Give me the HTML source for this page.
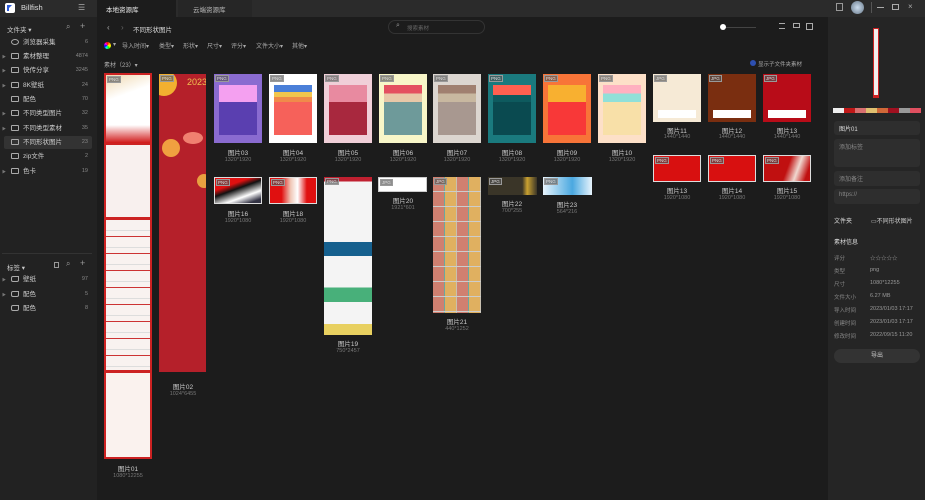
<!DOCTYPE html>
<html><head><meta charset="utf-8"><style>
*{margin:0;padding:0;box-sizing:border-box}
body{width:925px;height:500px;background:#1c1c1c;font-family:"Liberation Sans","Noto Sans CJK SC",sans-serif;color:#ccc;position:relative;overflow:hidden;font-size:7px}
.a{position:absolute}
.top{left:0;top:0;width:925px;height:17px;background:#2b2b2b}
.side{left:0;top:17px;width:97px;height:483px;background:#222}
.rp{left:828px;top:17px;width:97px;height:483px;background:#252525}
.it{position:absolute;left:4px;width:88px;height:13px;font-size:6.5px;color:#ccc;line-height:13px}
.it .n{position:absolute;right:4px;color:#888;font-size:5.5px}
.it .f{position:absolute;left:7px;top:3px;width:8px;height:6px;border:1px solid #aaa;border-radius:1px}
.it .t{position:absolute;left:19px}
.it .ar{position:absolute;left:-2px;color:#777;font-size:4px}
.th{position:absolute;overflow:hidden}
.lb{position:absolute;text-align:center;font-size:6.5px;color:#ccc;width:60px}
.dm{position:absolute;text-align:center;font-size:5.5px;color:#777;width:60px}
.tag{position:absolute;left:1px;top:1px;background:#555a;color:#ddd;font-size:4.5px;padding:0 1px;border:1px solid #999}
.fld{position:absolute;left:834px;width:86px;background:#2e2e2e;border-radius:3px;font-size:6px;color:#888;padding:3px 5px}
.kv{position:absolute;left:834px;font-size:5.5px;color:#888}
.kv b{position:absolute;left:36px;font-weight:normal;color:#999;white-space:nowrap}
.fl{position:absolute;top:41px;font-size:6px;color:#aaa}
</style></head><body>
<div class="a top"></div>
<div class="a" style="left:5px;top:3px;width:10px;height:10px;background:#fff;border-radius:2px"><div style="position:absolute;left:2px;top:2px;width:5px;height:6px;background:#2d5bd8;clip-path:polygon(0 0,100% 0,40% 50%,40% 100%,0 100%)"></div></div>
<div class="a" style="left:21px;top:3px;font-size:7.5px;color:#ddd">Billfish</div>
<div class="a" style="left:78px;top:3px;font-size:8px;color:#aaa">☰</div>
<div class="a" style="left:97px;top:0;width:79px;height:17px;background:#1c1c1c"></div>
<div class="a" style="left:106px;top:4px;font-size:6.5px;color:#eee">本地资源库</div>
<div class="a" style="left:178px;top:0;width:74px;height:17px;background:#262626"></div>
<div class="a" style="left:193px;top:4px;font-size:6.5px;color:#bbb">云端资源库</div>
<div class="a" style="left:836px;top:3px;width:7px;height:8px;border:1px solid #999"></div>
<div class="a" style="left:851px;top:1px;width:13px;height:13px;border-radius:50%;background:radial-gradient(#cde,#678)"></div>
<div class="a" style="left:871px;top:2px;width:1px;height:11px;background:#555"></div>
<div class="a" style="left:877px;top:7px;width:7px;height:1px;background:#aaa"></div>
<div class="a" style="left:892px;top:4px;width:7px;height:6px;border:1px solid #aaa"></div>
<div class="a" style="left:908px;top:2px;font-size:8px;color:#aaa">×</div>

<div class="a side"></div>
<div class="a" style="left:7px;top:24px;font-size:6.5px;color:#ccc">文件夹 ▾</div>
<div class="a" style="left:66px;top:22px;font-size:8px;color:#999">⌕</div>
<div class="a" style="left:80px;top:21px;font-size:9px;color:#999">+</div>
<div class="it" style="top:36px"><span class="f" style="border-radius:50%"></span><span class="t">浏览器采集</span><span class="n">6</span></div>
<div class="it" style="top:50px"><span class="ar">▶</span><span class="f"></span><span class="t">素材整理</span><span class="n">4874</span></div>
<div class="it" style="top:64px"><span class="ar">▶</span><span class="f"></span><span class="t">快传分享</span><span class="n">3245</span></div>
<div class="it" style="top:79px"><span class="ar">▶</span><span class="f"></span><span class="t">8K壁纸</span><span class="n">24</span></div>
<div class="it" style="top:93px"><span class="f"></span><span class="t">配色</span><span class="n">70</span></div>
<div class="it" style="top:107px"><span class="ar">▶</span><span class="f"></span><span class="t">不同类型图片</span><span class="n">32</span></div>
<div class="it" style="top:122px"><span class="ar">▶</span><span class="f"></span><span class="t">不同类型素材</span><span class="n">35</span></div>
<div class="it" style="top:136px;background:#333;border-radius:2px"><span class="f"></span><span class="t">不同形状图片</span><span class="n">23</span></div>
<div class="it" style="top:150px"><span class="f"></span><span class="t">zip文件</span><span class="n">2</span></div>
<div class="it" style="top:165px"><span class="ar">▶</span><span class="f"></span><span class="t">色卡</span><span class="n">19</span></div>
<div class="a" style="left:2px;top:253px;width:90px;height:1px;background:#333"></div>
<div class="a" style="left:7px;top:262px;font-size:6.5px;color:#ccc">标签 ▾</div>
<div class="a" style="left:54px;top:262px;width:5px;height:6px;border:1px solid #999"></div>
<div class="a" style="left:66px;top:259px;font-size:8px;color:#999">⌕</div>
<div class="a" style="left:80px;top:258px;font-size:9px;color:#999">+</div>
<div class="it" style="top:273px"><span class="ar">▶</span><span class="f" style="border-radius:2px 0 2px 2px"></span><span class="t">壁纸</span><span class="n">97</span></div>
<div class="it" style="top:288px"><span class="ar">▶</span><span class="f" style="border-radius:2px 0 2px 2px"></span><span class="t">配色</span><span class="n">5</span></div>
<div class="it" style="top:302px"><span class="f" style="border-radius:2px 0 2px 2px"></span><span class="t">配色</span><span class="n">8</span></div>

<div class="a" style="left:107px;top:23px;font-size:8px;color:#aaa">‹</div>
<div class="a" style="left:121px;top:23px;font-size:8px;color:#666">›</div>
<div class="a" style="left:133px;top:24px;font-size:6.5px;color:#ddd">不同形状图片</div>
<div class="a" style="left:388px;top:20px;width:97px;height:14px;border:1px solid #333;border-radius:7px"></div>
<div class="a" style="left:396px;top:22px;font-size:7px;color:#999">⌕</div>
<div class="a" style="left:407px;top:24px;font-size:5.5px;color:#666">搜索素材</div>
<div class="a" style="left:723px;top:27px;width:33px;height:1px;background:#444"></div>
<div class="a" style="left:720px;top:24px;width:6px;height:6px;border-radius:50%;background:#fff"></div>
<div class="a" style="left:779px;top:23px;width:6px;height:6px;border-top:1px solid #aaa;border-bottom:1px solid #aaa"></div>
<div class="a" style="left:793px;top:23px;width:7px;height:5px;border:1px solid #aaa"></div>
<div class="a" style="left:806px;top:23px;width:7px;height:7px;border:1px solid #aaa"></div>
<div class="a" style="left:104px;top:42px;width:7px;height:7px;border-radius:50%;background:conic-gradient(red,orange,yellow,lime,cyan,blue,magenta,red)"></div>
<div class="fl" style="left:113px">▾</div>
<div class="fl" style="left:122px">导入时间▾</div>
<div class="fl" style="left:159px">类型▾</div>
<div class="fl" style="left:183px">形状▾</div>
<div class="fl" style="left:207px">尺寸▾</div>
<div class="fl" style="left:231px">评分▾</div>
<div class="fl" style="left:256px">文件大小▾</div>
<div class="fl" style="left:292px">其他▾</div>
<div class="a" style="left:104px;top:60px;font-size:6px;color:#aaa">素材（23）▾</div>
<div class="a" style="left:750px;top:60px;width:6px;height:6px;border-radius:50%;background:#2d4fb0"></div>
<div class="a" style="left:758px;top:60px;font-size:5.5px;color:#aaa">显示子文件夹素材</div>

<!-- thumbnails -->
<div class="th" style="left:104px;top:73px;width:48px;height:386px;background:#faf2ee;border:2px solid #c22">
 <div style="height:50px;background:linear-gradient(160deg,#f0d8b0,#fff 40%)"></div>
 <div style="height:18px;background:linear-gradient(#fff,#d01818)"></div>
 <div style="height:74px;background:#f8f0ee;border-top:2px solid #c22"></div>
 <div style="height:3px;background:#c22"></div>
 <div style="height:150px;background:repeating-linear-gradient(#f8f2f0 0 10px,#ddd 10px 11px,#f8f2f0 11px 16px,#c33 16px 17px)"></div>
 <div style="height:3px;background:#c22"></div>
 <span class="tag">PNG</span></div>
<div class="lb" style="left:98px;top:463px">图片01</div><div class="dm" style="left:98px;top:473px">1080*12255</div>
<div class="th" style="left:159px;top:74px;width:47px;height:298px;background:#b5202a">
 <div style="position:absolute;left:-8px;top:-4px;width:26px;height:26px;border-radius:50%;background:#f2b030"></div>
 <div style="position:absolute;left:28px;top:3px;font-size:9px;color:#f0c050">2023</div>
 <div style="position:absolute;left:3px;top:65px;width:18px;height:18px;border-radius:50%;background:#f0a040"></div>
 <div style="position:absolute;left:24px;top:58px;width:20px;height:12px;border-radius:50%;background:#f08070"></div>
 <div style="position:absolute;left:38px;top:100px;width:14px;height:14px;border-radius:50%;background:#e8a040"></div>
 <span class="tag">PNG</span></div>
<div class="lb" style="left:153px;top:381px">图片02</div><div class="dm" style="left:153px;top:391px">1024*6455</div>

<div class="th" style="left:214px;top:74px;width:48px;height:69px;background:#8a6bd0"><div style="margin:11px 5px 0;height:17px;background:#f4a0f0"></div><div style="margin:0 5px;height:33px;background:#5a3fb0"></div><span class="tag">PNG</span></div>
<div class="lb" style="left:208px;top:147px">图片03</div><div class="dm" style="left:208px;top:157px">1320*1920</div>
<div class="th" style="left:269px;top:74px;width:48px;height:69px;background:#fff"><div style="margin:11px 5px 0;height:17px;background:linear-gradient(#4a7fd8 40%,#f2c64d 40%,#f2c64d 70%,#f08a4a 70%)"></div><div style="margin:0 5px;height:33px;background:#f6615a"></div><span class="tag">PNG</span></div>
<div class="lb" style="left:263px;top:147px">图片04</div><div class="dm" style="left:263px;top:157px">1320*1920</div>
<div class="th" style="left:324px;top:74px;width:48px;height:69px;background:#f0cfd8"><div style="margin:11px 5px 0;height:17px;background:#e88aa0"></div><div style="margin:0 5px;height:33px;background:#a8283e"></div><span class="tag">PNG</span></div>
<div class="lb" style="left:318px;top:147px">图片05</div><div class="dm" style="left:318px;top:157px">1320*1920</div>
<div class="th" style="left:379px;top:74px;width:48px;height:69px;background:#f8f6c8"><div style="margin:11px 5px 0;height:17px;background:linear-gradient(#e45060 50%,#e8c8a8 50%)"></div><div style="margin:0 5px;height:33px;background:#6e9a9a"></div><span class="tag">PNG</span></div>
<div class="lb" style="left:373px;top:147px">图片06</div><div class="dm" style="left:373px;top:157px">1320*1920</div>
<div class="th" style="left:433px;top:74px;width:48px;height:69px;background:#dcd6d0"><div style="margin:11px 5px 0;height:17px;background:linear-gradient(#a08070 50%,#c8b8a0 50%)"></div><div style="margin:0 5px;height:33px;background:#a89890"></div><span class="tag">PNG</span></div>
<div class="lb" style="left:427px;top:147px">图片07</div><div class="dm" style="left:427px;top:157px">1320*1920</div>
<div class="th" style="left:488px;top:74px;width:48px;height:69px;background:#1a7a7e"><div style="margin:11px 5px 0;height:17px;background:linear-gradient(#ff6050 60%,#0e5a5e 60%)"></div><div style="margin:0 5px;height:33px;background:#0a4a50"></div><span class="tag">PNG</span></div>
<div class="lb" style="left:482px;top:147px">图片08</div><div class="dm" style="left:482px;top:157px">1320*1920</div>
<div class="th" style="left:543px;top:74px;width:48px;height:69px;background:#f87438"><div style="margin:11px 5px 0;height:17px;background:#f8b030"></div><div style="margin:0 5px;height:33px;background:#f83838"></div><span class="tag">PNG</span></div>
<div class="lb" style="left:537px;top:147px">图片09</div><div class="dm" style="left:537px;top:157px">1320*1920</div>
<div class="th" style="left:598px;top:74px;width:48px;height:69px;background:#fde0c8"><div style="margin:11px 5px 0;height:17px;background:linear-gradient(#ffb0c0 50%,#90e0d8 50%)"></div><div style="margin:0 5px;height:33px;background:#f8e0a8"></div><span class="tag">PNG</span></div>
<div class="lb" style="left:592px;top:147px">图片10</div><div class="dm" style="left:592px;top:157px">1320*1920</div>

<div class="th" style="left:653px;top:74px;width:48px;height:48px;background:#f6ead6"><div style="margin:36px 5px 0;height:8px;background:#fff"></div><span class="tag">JPG</span></div>
<div class="lb" style="left:647px;top:125px">图片11</div><div class="dm" style="left:647px;top:134px">1440*1440</div>
<div class="th" style="left:708px;top:74px;width:48px;height:48px;background:#7a2e10"><div style="margin:36px 5px 0;height:8px;background:#fff"></div><span class="tag">JPG</span></div>
<div class="lb" style="left:702px;top:125px">图片12</div><div class="dm" style="left:702px;top:134px">1440*1440</div>
<div class="th" style="left:763px;top:74px;width:48px;height:48px;background:#b80c18"><div style="margin:36px 5px 0;height:8px;background:#fff"></div><span class="tag">JPG</span></div>
<div class="lb" style="left:757px;top:125px">图片13</div><div class="dm" style="left:757px;top:134px">1440*1440</div>

<div class="th" style="left:653px;top:155px;width:48px;height:27px;background:#d81010;border:1px solid #ddd"><span class="tag">PNG</span></div>
<div class="lb" style="left:647px;top:185px">图片13</div><div class="dm" style="left:647px;top:195px">1920*1080</div>
<div class="th" style="left:708px;top:155px;width:48px;height:27px;background:#d81010;border:1px solid #ddd"><span class="tag">PNG</span></div>
<div class="lb" style="left:702px;top:185px">图片14</div><div class="dm" style="left:702px;top:195px">1920*1080</div>
<div class="th" style="left:763px;top:155px;width:48px;height:27px;background:linear-gradient(110deg,#c01010 50%,#f0d8d0 70%,#c01010 90%);border:1px solid #ddd"><span class="tag">PNG</span></div>
<div class="lb" style="left:757px;top:185px">图片15</div><div class="dm" style="left:757px;top:195px">1920*1080</div>

<div class="th" style="left:214px;top:177px;width:48px;height:27px;background:linear-gradient(160deg,#e01010 30%,#111 45%,#fff 70%,#334 90%);border:1px solid #ddd"><span class="tag">PNG</span></div>
<div class="lb" style="left:208px;top:208px">图片16</div><div class="dm" style="left:208px;top:218px">1920*1080</div>
<div class="th" style="left:269px;top:177px;width:48px;height:27px;background:linear-gradient(90deg,#e01010 25%,#f0c8b8 45%,#fff 60%,#e01010 80%);border:1px solid #ddd"><span class="tag">PNG</span></div>
<div class="lb" style="left:263px;top:208px">图片18</div><div class="dm" style="left:263px;top:218px">1920*1080</div>
<div class="th" style="left:324px;top:177px;width:48px;height:158px;background:linear-gradient(#c02030 0,#c02030 3%,#f4f4f4 3%,#f4f4f4 41%,#16608e 41%,#16608e 50%,#f4f4f4 50%,#f4f4f4 70%,#48b07a 70%,#48b07a 79%,#f4f4f4 79%,#f4f4f4 93%,#e8d060 93%)"><span class="tag">PNG</span></div>
<div class="lb" style="left:318px;top:338px">图片19</div><div class="dm" style="left:318px;top:348px">750*2457</div>
<div class="th" style="left:378px;top:177px;width:49px;height:15px;background:#fff;border:1px solid #ccc"><span class="tag">JPG</span></div>
<div class="lb" style="left:373px;top:195px">图片20</div><div class="dm" style="left:373px;top:205px">1921*601</div>
<div class="th" style="left:433px;top:177px;width:48px;height:136px;background:repeating-linear-gradient(90deg,#d08070 0 11px,#6aa8a0 11px 12px,#e0b060 12px 23px,#c8c0b0 23px 24px);"><div style="position:absolute;inset:0;background:repeating-linear-gradient(#0000 0 14px,#ccc 14px 15px)"></div><span class="tag">JPG</span></div>
<div class="lb" style="left:427px;top:316px">图片21</div><div class="dm" style="left:427px;top:326px">440*1252</div>
<div class="th" style="left:488px;top:177px;width:49px;height:18px;background:linear-gradient(90deg,#3a3528 70%,#c8a030 80%,#3a3528)"><span class="tag">JPG</span></div>
<div class="lb" style="left:482px;top:198px">图片22</div><div class="dm" style="left:482px;top:208px">700*255</div>
<div class="th" style="left:543px;top:177px;width:49px;height:18px;background:linear-gradient(90deg,#e8f4fc,#4aa8e0 60%,#e8f4fc)"><span class="tag">PNG</span></div>
<div class="lb" style="left:537px;top:199px">图片23</div><div class="dm" style="left:537px;top:209px">564*216</div>

<!-- right panel -->
<div class="a rp"></div>
<div class="a" style="left:873px;top:28px;width:6px;height:70px;background:#f4eeee;border:1px solid #c22;border-bottom:3px solid #c22"></div>
<div class="a" style="left:833px;top:108px;width:88px;height:5px;display:flex"><i style="flex:1;background:#eee"></i><i style="flex:1;background:#c01818"></i><i style="flex:1;background:#d87070"></i><i style="flex:1;background:#e0c070"></i><i style="flex:1;background:#d06838"></i><i style="flex:1;background:#a01020"></i><i style="flex:1;background:#999"></i><i style="flex:1;background:#e05060"></i></div>
<div class="fld" style="top:121px;height:14px;color:#ddd">图片01</div>
<div class="fld" style="top:139px;height:28px">添加标签</div>
<div class="fld" style="top:171px;height:15px">添加备注</div>
<div class="fld" style="top:189px;height:15px">https://</div>
<div class="a" style="left:834px;top:216px;font-size:6px;color:#ddd">文件夹</div>
<div class="a" style="left:871px;top:216px;font-size:6px;color:#ccc">▭不同形状图片</div>
<div class="a" style="left:834px;top:237px;font-size:6px;color:#ddd">素材信息</div>
<div class="kv" style="top:254px">评分<b>☆☆☆☆☆</b></div>
<div class="kv" style="top:267px">类型<b>png</b></div>
<div class="kv" style="top:280px">尺寸<b>1080*12255</b></div>
<div class="kv" style="top:293px">文件大小<b>6.27 MB</b></div>
<div class="kv" style="top:306px">导入时间<b>2023/01/03 17:17</b></div>
<div class="kv" style="top:319px">创建时间<b>2023/01/03 17:17</b></div>
<div class="kv" style="top:332px">修改时间<b>2022/09/15 11:20</b></div>
<div class="a" style="left:834px;top:349px;width:86px;height:14px;background:#333;border-radius:7px;text-align:center;font-size:6px;line-height:14px;color:#ccc">导出</div>
</body></html>
